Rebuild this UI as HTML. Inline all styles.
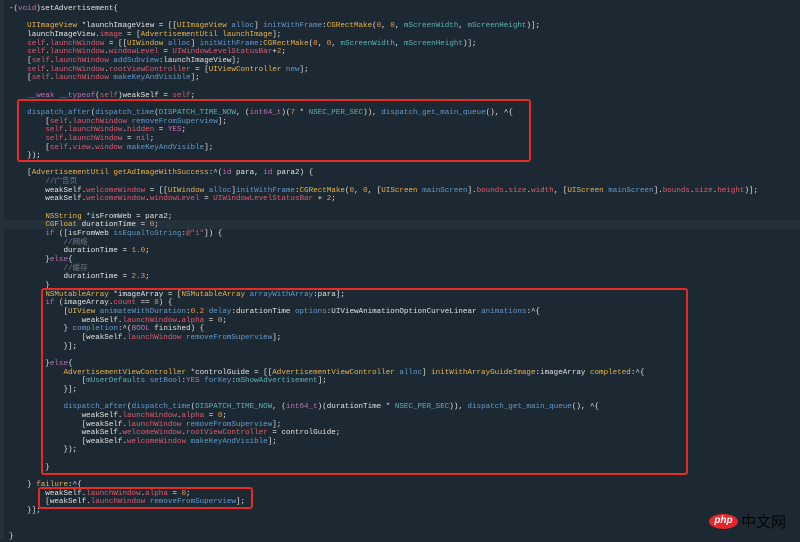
<!DOCTYPE html>
<html><head><meta charset="utf-8"><style>
body{margin:0;width:800px;height:540px;background:#1d2932;overflow:hidden;position:relative}
.g{position:absolute;left:0;top:0;width:4px;height:540px;background:#26323b}
.hl{position:absolute;left:0;top:220px;width:800px;height:9px;background:#25313a}
pre{position:absolute;left:9px;top:5px;margin:0;font-family:"Liberation Mono","Noto Sans CJK SC",monospace;font-size:7.57px;line-height:8.66px;color:#e2e2e2;white-space:pre}
.r{color:#dc5a70}.y{color:#e8b44c}.b{color:#6399cc}.t{color:#5cb2b2}.n{color:#ea9c54}.k{color:#c070b4}.c{color:#707d89}
.box{position:absolute;border:2px solid #e62b25;border-radius:3px}
.logo{position:absolute;left:709px;top:514px;width:29px;height:15px;border-radius:50%;background:#e8262b;color:#fff;font:italic bold 10px "Liberation Sans",sans-serif;text-align:center;line-height:14px}
svg.cn{position:absolute;left:740px;top:511px}
</style></head><body>
<div class="g"></div><div class="hl"></div>
<pre>-(<span class="k">void</span>)setAdvertisement{

    <span class="y">UIImageView</span> *launchImageView = [[<span class="y">UIImageView</span> <span class="b">alloc</span>] <span class="b">initWithFrame</span>:<span class="y">CGRectMake</span>(<span class="n">0</span>, <span class="n">0</span>, <span class="t">mScreenWidth</span>, <span class="t">mScreenHeight</span>)];
    launchImageView.<span class="r">image</span> = [<span class="y">AdvertisementUtil</span> <span class="y">launchImage</span>];
    <span class="r">self</span>.<span class="r">launchWindow</span> = [[<span class="y">UIWindow</span> <span class="b">alloc</span>] <span class="b">initWithFrame</span>:<span class="y">CGRectMake</span>(<span class="n">0</span>, <span class="n">0</span>, <span class="t">mScreenWidth</span>, <span class="t">mScreenHeight</span>)];
    <span class="r">self</span>.<span class="r">launchWindow</span>.<span class="r">windowLevel</span> = <span class="r">UIWindowLevelStatusBar</span>+<span class="n">2</span>;
    [<span class="r">self</span>.<span class="r">launchWindow</span> <span class="b">addSubview</span>:launchImageView];
    <span class="r">self</span>.<span class="r">launchWindow</span>.<span class="r">rootViewController</span> = [<span class="y">UIViewController</span> <span class="b">new</span>];
    [<span class="r">self</span>.<span class="r">launchWindow</span> <span class="b">makeKeyAndVisible</span>];

    <span class="k">__weak</span> <span class="k">__typeof</span>(<span class="r">self</span>)weakSelf = <span class="r">self</span>;

    <span class="b">dispatch_after</span>(<span class="b">dispatch_time</span>(<span class="t">DISPATCH_TIME_NOW</span>, (<span class="k">int64_t</span>)(<span class="n">7</span> * <span class="t">NSEC_PER_SEC</span>)), <span class="b">dispatch_get_main_queue</span>(), ^{
        [<span class="r">self</span>.<span class="r">launchWindow</span> <span class="b">removeFromSuperview</span>];
        <span class="r">self</span>.<span class="r">launchWindow</span>.<span class="r">hidden</span> = <span class="k">YES</span>;
        <span class="r">self</span>.<span class="r">launchWindow</span> = <span class="k">nil</span>;
        [<span class="r">self</span>.<span class="r">view</span>.<span class="r">window</span> <span class="b">makeKeyAndVisible</span>];
    });

    [<span class="y">AdvertisementUtil</span> <span class="y">getAdImageWithSuccess</span>:^(<span class="k">id</span> para, <span class="k">id</span> para2) {
        <span class="c">//广告页</span>
        weakSelf.<span class="r">welcomeWindow</span> = [[<span class="y">UIWindow</span> <span class="b">alloc</span>]<span class="b">initWithFrame</span>:<span class="y">CGRectMake</span>(<span class="n">0</span>, <span class="n">0</span>, [<span class="y">UIScreen</span> <span class="b">mainScreen</span>].<span class="r">bounds</span>.<span class="r">size</span>.<span class="r">width</span>, [<span class="y">UIScreen</span> <span class="b">mainScreen</span>].<span class="r">bounds</span>.<span class="r">size</span>.<span class="r">height</span>)];
        weakSelf.<span class="r">welcomeWindow</span>.<span class="r">windowLevel</span> = <span class="r">UIWindowLevelStatusBar</span> + <span class="n">2</span>;

        <span class="y">NSString</span> *isFromWeb = para2;
        <span class="y">CGFloat</span> durationTime = <span class="n">0</span>;
        <span class="k">if</span> ([isFromWeb <span class="b">isEqualToString</span>:<span class="r">@"1"</span>]) {
            <span class="c">//网络</span>
            durationTime = <span class="n">1.0</span>;
        }<span class="k">else</span>{
            <span class="c">//缓存</span>
            durationTime = <span class="n">2.3</span>;
        }
        <span class="y">NSMutableArray</span> *imageArray = [<span class="y">NSMutableArray</span> <span class="b">arrayWithArray</span>:para];
        <span class="k">if</span> (imageArray.<span class="r">count</span> == <span class="n">0</span>) {
            [<span class="y">UIView</span> <span class="b">animateWithDuration</span>:<span class="n">0.2</span> <span class="b">delay</span>:durationTime <span class="b">options</span>:UIViewAnimationOptionCurveLinear <span class="b">animations</span>:^{
                weakSelf.<span class="r">launchWindow</span>.<span class="r">alpha</span> = <span class="n">0</span>;
            } <span class="b">completion</span>:^(<span class="k">BOOL</span> finished) {
                [weakSelf.<span class="r">launchWindow</span> <span class="b">removeFromSuperview</span>];
            }];

        }<span class="k">else</span>{
            <span class="y">AdvertisementViewController</span> *controlGuide = [[<span class="y">AdvertisementViewController</span> <span class="b">alloc</span>] <span class="y">initWithArrayGuideImage</span>:imageArray <span class="y">completed</span>:^{
                [<span class="t">mUserDefaults</span> <span class="b">setBool</span>:<span class="k">YES</span> <span class="b">forKey</span>:<span class="t">mShowAdvertisement</span>];
            }];

            <span class="b">dispatch_after</span>(<span class="b">dispatch_time</span>(<span class="t">DISPATCH_TIME_NOW</span>, (<span class="k">int64_t</span>)(durationTime * <span class="t">NSEC_PER_SEC</span>)), <span class="b">dispatch_get_main_queue</span>(), ^{
                weakSelf.<span class="r">launchWindow</span>.<span class="r">alpha</span> = <span class="n">0</span>;
                [weakSelf.<span class="r">launchWindow</span> <span class="b">removeFromSuperview</span>];
                weakSelf.<span class="r">welcomeWindow</span>.<span class="r">rootViewController</span> = controlGuide;
                [weakSelf.<span class="r">welcomeWindow</span> <span class="b">makeKeyAndVisible</span>];
            });

        }

    } <span class="y">failure</span>:^{
        weakSelf.<span class="r">launchWindow</span>.<span class="r">alpha</span> = <span class="n">0</span>;
        [weakSelf.<span class="r">launchWindow</span> <span class="b">removeFromSuperview</span>];
    }];


}</pre>
<div class="box" style="left:17px;top:99px;width:510px;height:59px"></div>
<div class="box" style="left:41px;top:288px;width:643px;height:183px"></div>
<div class="box" style="left:38px;top:487px;width:211px;height:18px"></div>
<div class="logo">php</div>
<svg class="cn" width="56" height="22"><text x="1" y="16" fill="#050505" font-family="Noto Sans CJK SC, sans-serif" font-size="15">中文网</text></svg>
</body></html>
